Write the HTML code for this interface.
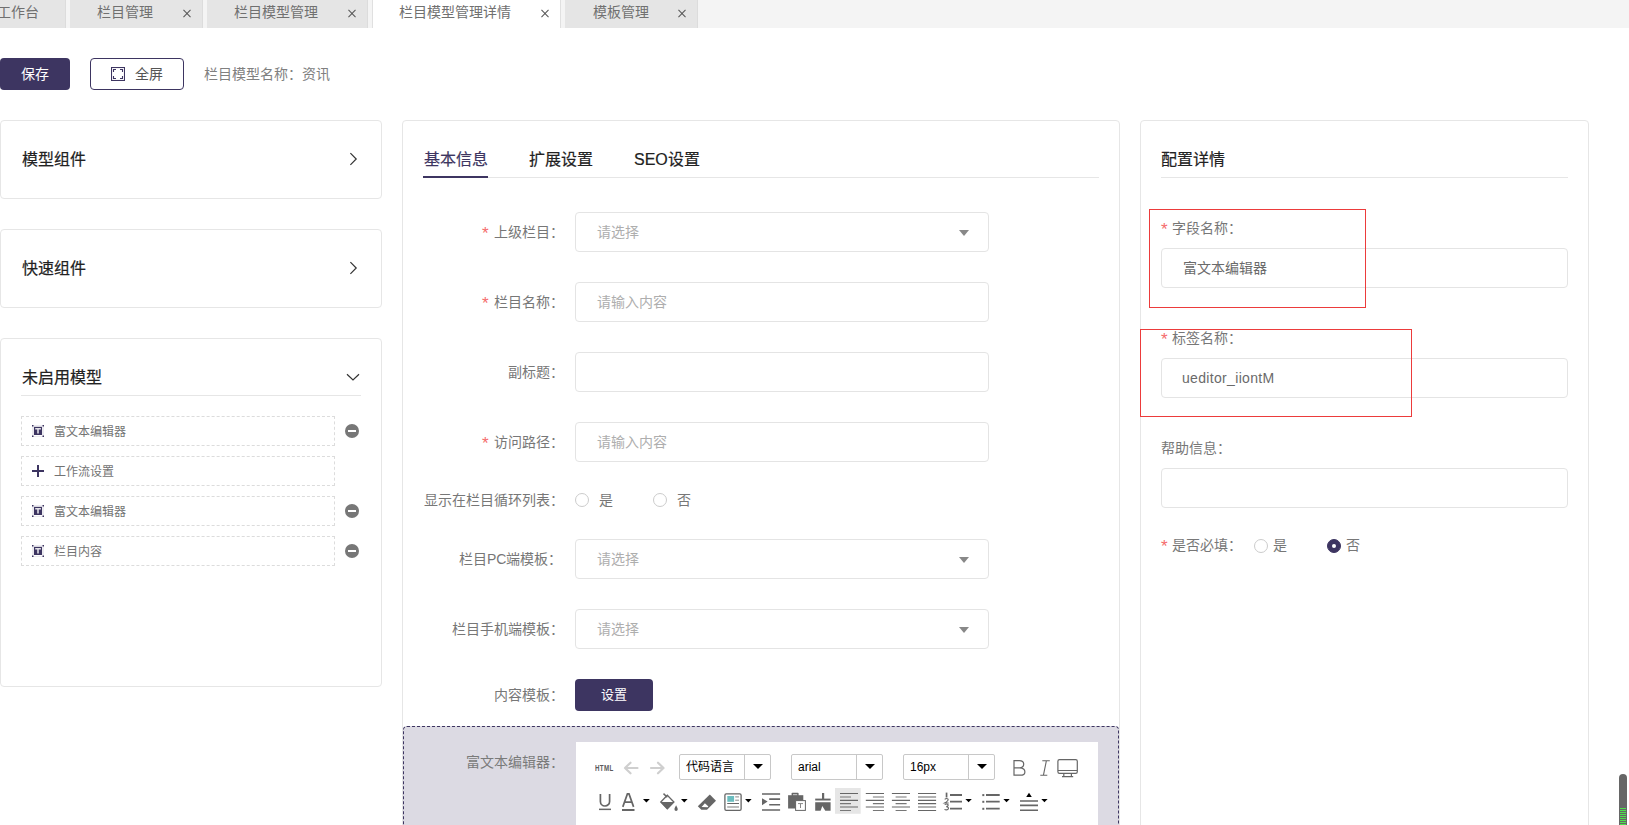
<!DOCTYPE html>
<html lang="zh-CN">
<head>
<meta charset="utf-8">
<style>
*{box-sizing:border-box;margin:0;padding:0}
html,body{width:1629px;height:825px;overflow:hidden;background:#fff}
body{position:relative;font-family:"Liberation Sans",sans-serif;font-size:14px;color:#606266}
.a{position:absolute}
.t{position:absolute;white-space:nowrap;line-height:20px;height:20px}
/* tab bar */
#tabbar{left:0;top:0;width:1629px;height:28px;background:#f4f4f4}
.tab{position:absolute;top:0;height:28px;background:#e5e5e5;border-right:1px solid #dcdcdc}
.tab.on{background:#fff;border-left:1px solid #e0e0e0;border-right:1px solid #e0e0e0}
.tab .t{top:2px;color:#707070;font-size:14px}
.x{position:absolute;top:9px;width:8px;height:8px}
.x:before,.x:after{content:"";position:absolute;left:-1px;top:3.5px;width:10px;height:1px;background:#555;transform:rotate(45deg)}
.x:after{transform:rotate(-45deg)}
/* buttons */
.btn{position:absolute;border-radius:4px;background:#3d3561;color:#fff}
.card{position:absolute;border:1px solid #e6e6e6;border-radius:4px;background:#fff}
.ttl{font-size:16px;font-weight:400;color:#222;-webkit-text-stroke:0.2px #222}
.inp{position:absolute;border:1px solid #e4e4e4;border-radius:4px;background:#fff}
.ph{color:#aeaeae}
.lbl{color:#777}
.req{color:#f56c6c;font-size:17px;transform:translateY(2px)}
.tri{position:absolute;width:0;height:0;border-left:5px solid transparent;border-right:5px solid transparent;border-top:6px solid #888}
.radio{position:absolute;width:14px;height:14px;border:1px solid #ccc;border-radius:50%;background:#fff}
.dash{position:absolute;border:1px dashed #dcdcdc;left:21px;width:314px;height:30px}
.minus{position:absolute;left:345px;width:14px;height:14px;border-radius:50%;background:#777}
.minus:after{content:"";position:absolute;left:3px;top:6px;width:8px;height:2px;background:#fff}
.ticon{position:absolute;left:32px;width:12px;height:12px;background:#3d3561}
.ticon:after{content:"";position:absolute;left:3px;top:3px;width:6px;height:2px;background:#fff}
.ticon:before{content:"";position:absolute;left:5px;top:3px;width:2px;height:6px;background:#fff}
.dd{position:absolute;top:754px;height:26px;border:1px solid #c8c8c8;border-radius:2px;background:#fff}
.sep{position:absolute;top:0;width:1px;height:24px;background:#c8c8c8}
.tri2{position:absolute;top:9px;width:0;height:0;border-left:5px solid transparent;border-right:5px solid transparent;border-top:5px solid #000}
</style>
</head>
<body>
<!-- TAB BAR -->
<div id="tabbar" class="a">
  <div class="tab" style="left:-10px;width:76px"><span class="t" style="left:7px">工作台</span></div>
  <div class="tab" style="left:70px;width:133px"><span class="t" style="left:27px">栏目管理</span><i class="x" style="left:113px"></i></div>
  <div class="tab" style="left:207px;width:161px"><span class="t" style="left:27px">栏目模型管理</span><i class="x" style="left:141px"></i></div>
  <div class="tab on" style="left:372px;width:189px"><span class="t" style="left:26px">栏目模型管理详情</span><i class="x" style="left:168px"></i></div>
  <div class="tab" style="left:565px;width:133px"><span class="t" style="left:28px">模板管理</span><i class="x" style="left:113px"></i></div>
</div>

<!-- TOOLBAR -->
<div class="btn" style="left:0;top:58px;width:70px;height:32px"><span class="t" style="left:21px;top:6px;color:#fff">保存</span></div>
<div class="a" style="left:90px;top:58px;width:94px;height:32px;border:1px solid #3d3561;border-radius:4px">
  <svg class="a" style="left:20px;top:8px" width="14" height="14" viewBox="0 0 14 14" fill="none" stroke="#3d3561" stroke-width="1.1"><rect x="0.5" y="0.5" width="13" height="13"/><path d="M2.5 5V2.5H5M9 2.5H11.5V5M2.5 9V11.5H5M9 11.5H11.5V9"/></svg>
  <span class="t" style="left:44px;top:5px;color:#555">全屏</span>
</div>
<span class="t" style="left:204px;top:64px;color:#808080">栏目模型名称：资讯</span>

<!-- LEFT CARDS -->
<div class="card" style="left:0;top:120px;width:382px;height:79px">
  <span class="t ttl" style="left:21px;top:29px">模型组件</span>
</div>
<div class="card" style="left:0;top:229px;width:382px;height:79px">
  <span class="t ttl" style="left:21px;top:29px">快速组件</span>
</div>
<div class="card" style="left:0;top:338px;width:382px;height:349px">
  <span class="t ttl" style="left:21px;top:29px">未启用模型</span>
  <div class="a" style="left:20px;top:56px;width:340px;height:1px;background:#e6e6e6"></div>
</div>
<div class="dash" style="top:416px"></div>
<div class="dash" style="top:456px"></div>
<div class="dash" style="top:496px"></div>
<div class="dash" style="top:536px"></div>
<svg class="a" style="left:32px;top:425px" width="12" height="12" viewBox="0 0 12 12"><rect x="0.5" y="0.5" width="11" height="11" fill="none" stroke="#3d3561" stroke-opacity="0.1"/><g fill="#3d3561"><rect x="0" y="0" width="1.5" height="1.5"/><rect x="10.5" y="0" width="1.5" height="1.5"/><rect x="0" y="10.5" width="1.5" height="1.5"/><rect x="10.5" y="10.5" width="1.5" height="1.5"/><rect x="1.9" y="1.8" width="8.2" height="8.2"/></g><path d="M3.2 2.9H8.9V4.4H6.8V8.6H5.2V4.4H3.2Z" fill="#fff" fill-opacity="0.85"/></svg>
<svg class="a" style="left:32px;top:505px" width="12" height="12" viewBox="0 0 12 12"><rect x="0.5" y="0.5" width="11" height="11" fill="none" stroke="#3d3561" stroke-opacity="0.1"/><g fill="#3d3561"><rect x="0" y="0" width="1.5" height="1.5"/><rect x="10.5" y="0" width="1.5" height="1.5"/><rect x="0" y="10.5" width="1.5" height="1.5"/><rect x="10.5" y="10.5" width="1.5" height="1.5"/><rect x="1.9" y="1.8" width="8.2" height="8.2"/></g><path d="M3.2 2.9H8.9V4.4H6.8V8.6H5.2V4.4H3.2Z" fill="#fff" fill-opacity="0.85"/></svg>
<svg class="a" style="left:32px;top:545px" width="12" height="12" viewBox="0 0 12 12"><rect x="0.5" y="0.5" width="11" height="11" fill="none" stroke="#3d3561" stroke-opacity="0.1"/><g fill="#3d3561"><rect x="0" y="0" width="1.5" height="1.5"/><rect x="10.5" y="0" width="1.5" height="1.5"/><rect x="0" y="10.5" width="1.5" height="1.5"/><rect x="10.5" y="10.5" width="1.5" height="1.5"/><rect x="1.9" y="1.8" width="8.2" height="8.2"/></g><path d="M3.2 2.9H8.9V4.4H6.8V8.6H5.2V4.4H3.2Z" fill="#fff" fill-opacity="0.85"/></svg>
<span class="t" style="left:54px;top:422px;font-size:12px;color:#737373">富文本编辑器</span>
<span class="t" style="left:54px;top:462px;font-size:12px;color:#737373">工作流设置</span>
<span class="t" style="left:54px;top:502px;font-size:12px;color:#737373">富文本编辑器</span>
<span class="t" style="left:54px;top:542px;font-size:12px;color:#737373">栏目内容</span>
<i class="minus" style="top:424px"></i>
<i class="minus" style="top:504px"></i>
<i class="minus" style="top:544px"></i>

<svg class="a" style="left:0;top:0" width="400" height="600" viewBox="0 0 400 600" fill="none" stroke="#333" stroke-width="1.2">
 <path d="M350.4 153.2L356.2 159L350.4 164.8"/>
 <path d="M350.4 262.2L356.2 268L350.4 273.8"/>
 <path d="M347 374.2L353 380L359 374.2"/>
 <path d="M32 471H44M38 465V477" stroke="#3d3561" stroke-width="2"/>
</svg>
<!-- MIDDLE PANEL -->
<div class="card" style="left:402px;top:120px;width:718px;height:720px"></div>
<span class="t" style="left:424px;top:149px;font-size:16px;color:#3d3561;height:22px;line-height:22px;-webkit-text-stroke:0.2px #3d3561">基本信息</span>
<span class="t" style="left:529px;top:149px;font-size:16px;color:#222;height:22px;line-height:22px;-webkit-text-stroke:0.2px #222">扩展设置</span>
<span class="t" style="left:634px;top:149px;font-size:16px;color:#222;height:22px;line-height:22px;-webkit-text-stroke:0.2px #222">SEO设置</span>
<div class="a" style="left:423px;top:177px;width:676px;height:1px;background:#e6e6e6"></div>
<div class="a" style="left:423px;top:176px;width:65px;height:2px;background:#3d3561"></div>

<span class="t req" style="left:482px;top:222px">*</span><span class="t lbl" style="left:494px;top:222px">上级栏目：</span>
<div class="inp" style="left:575px;top:212px;width:414px;height:40px"><span class="t ph" style="left:21px;top:9px">请选择</span><i class="tri" style="left:383px;top:17px"></i></div>

<span class="t req" style="left:482px;top:292px">*</span><span class="t lbl" style="left:494px;top:292px">栏目名称：</span>
<div class="inp" style="left:575px;top:282px;width:414px;height:40px"><span class="t ph" style="left:21px;top:9px">请输入内容</span></div>

<span class="t lbl" style="left:508px;top:362px">副标题：</span>
<div class="inp" style="left:575px;top:352px;width:414px;height:40px"></div>

<span class="t req" style="left:482px;top:432px">*</span><span class="t lbl" style="left:494px;top:432px">访问路径：</span>
<div class="inp" style="left:575px;top:422px;width:414px;height:40px"><span class="t ph" style="left:21px;top:9px">请输入内容</span></div>

<span class="t lbl" style="left:424px;top:490px">显示在栏目循环列表：</span>
<i class="radio" style="left:575px;top:493px"></i><span class="t lbl" style="left:599px;top:490px">是</span>
<i class="radio" style="left:653px;top:493px"></i><span class="t lbl" style="left:677px;top:490px">否</span>

<span class="t lbl" style="left:459px;top:549px">栏目PC端模板：</span>
<div class="inp" style="left:575px;top:539px;width:414px;height:40px"><span class="t ph" style="left:21px;top:9px">请选择</span><i class="tri" style="left:383px;top:17px"></i></div>

<span class="t lbl" style="left:452px;top:619px">栏目手机端模板：</span>
<div class="inp" style="left:575px;top:609px;width:414px;height:40px"><span class="t ph" style="left:21px;top:9px">请选择</span><i class="tri" style="left:383px;top:17px"></i></div>

<span class="t lbl" style="left:494px;top:685px">内容模板：</span>
<div class="btn" style="left:575px;top:679px;width:78px;height:32px"><span class="t" style="left:26px;top:6px;color:#fff;font-size:13px">设置</span></div>

<!-- EDITOR -->
<div class="a" style="left:403px;top:726px;width:716px;height:120px;background:#dcdae3;border:1px dashed #3d3561;border-radius:4px"></div>
<span class="t" style="left:466px;top:752px;color:#7a7a7a">富文本编辑器：</span>
<div class="a" style="left:576px;top:742px;width:522px;height:100px;background:#fff"></div>
<!-- editor toolbar row1 -->
<span class="a" style="left:595px;top:763px;font-size:8.6px;line-height:10px;font-weight:700;color:#5a5a5a;letter-spacing:0.5px;transform:scaleX(0.72);transform-origin:0 0;white-space:nowrap">HTML</span>
<div class="dd" style="left:679px;width:92px"><span class="t" style="left:6px;top:1px;font-size:12px;color:#000;line-height:22px;height:22px">代码语言</span><i class="sep" style="left:64px"></i><i class="tri2" style="left:73px"></i></div>
<div class="dd" style="left:791px;width:92px"><span class="t" style="left:6px;top:1px;font-size:12px;color:#000;line-height:22px;height:22px">arial</span><i class="sep" style="left:64px"></i><i class="tri2" style="left:73px"></i></div>
<div class="dd" style="left:903px;width:92px"><span class="t" style="left:6px;top:1px;font-size:12px;color:#000;line-height:22px;height:22px">16px</span><i class="sep" style="left:64px"></i><i class="tri2" style="left:73px"></i></div>
<svg class="a" style="left:0;top:0" width="1629" height="825" viewBox="0 0 1629 825">
 <g fill="none" stroke="#cfcfcf" stroke-width="2.2" stroke-linecap="round" stroke-linejoin="round">
  <path d="M637.5 768H625M630.5 762.7L625 768L630.5 773.3"/>
  <path d="M651 768H663.5M658 762.7L663.5 768L658 773.3"/>
 </g>
 <g fill="none" stroke="#666" stroke-width="1.2">
  <path d="M1014 760.7H1019.3C1022.4 760.7 1023.7 762.4 1023.7 764.2C1023.7 766.1 1022.4 767.5 1019.6 767.8C1023 768 1024.9 769.7 1024.9 771.9C1024.9 774.2 1023.2 775.2 1020.2 775.2H1014ZM1014 767.8H1019.8"/>
  <path d="M1042.3 760.7H1049.8M1040.3 775.3H1047.3M1046.4 760.7L1043.4 775.3" stroke-width="1.1"/>
  <rect x="1057.9" y="759.7" width="19.4" height="13.6" rx="1.6"/>
  <path d="M1058 770.5H1077M1063.8 773.3V776.2M1071.4 773.3V776.2M1062 776.6H1073.2"/>
 </g>
 <!-- row2 -->
 <g fill="none" stroke="#666" stroke-width="1.3">
  <path d="M600.4 794V801.4A4.6 4.6 0 0 0 609.6 801.4V794" stroke-width="1.7"/>
  <path d="M622.8 806.9L627.4 793.9H629L633.6 806.9M624.5 802.2H631.9" stroke-width="1.7"/>
 </g>
 <g fill="#666">
  <rect x="599" y="808.6" width="12" height="1.5"/>
  <rect x="622" y="809" width="12.5" height="2"/>
 </g>
 <g fill="#000">
  <path d="M643 799H649.8L646.4 802.4Z"/>
  <path d="M681 799H687.6L684.3 802.4Z"/>
  <path d="M745.1 799H751.6L748.35 802.4Z"/>
  <path d="M965.4 799H971.8L968.6 802.3Z"/>
  <path d="M1003.4 799H1009.7L1006.55 802.3Z"/>
  <path d="M1041.3 799H1047.6L1044.45 802.3Z"/>
 </g>
 <!-- bucket -->
 <path d="M660.8 802L667.3 795.3L673.9 802L667.3 808.8Z" fill="none" stroke="#666" stroke-width="1.3"/>
 <path d="M660.5 802H674.2L667.3 809.3Z" fill="#666"/>
 <path d="M663.5 793.6L667.3 797.2" stroke="#666" stroke-width="1.5"/>
 <path d="M676.1 805.3C675.2 807 674.5 808 674.5 809.3C674.5 810.3 675.2 810.9 676.1 810.9C677 810.9 677.7 810.3 677.7 809.3C677.7 808 677 807 676.1 805.3Z" fill="#666"/>
 <!-- eraser -->
 <path d="M709.8 794.6L716 800.8L707 809.7H701.3L697.8 806.3Z" fill="#666"/>
 <path d="M701.6 807.1L704.9 803.2L708.4 806.4L707.6 807.3Z" fill="#fff"/>
 <!-- image layout -->
 <rect x="724.9" y="793.9" width="16.2" height="16.4" rx="1.3" fill="none" stroke="#666" stroke-width="1.3"/>
 <rect x="727.3" y="796" width="6.8" height="5.8" fill="#6bbdbf"/>
 <path d="M735.2 796.9H739M735.2 800.2H739" stroke="#888" stroke-width="1"/>
 <path d="M727.2 803.5H739" stroke="#666" stroke-width="1"/>
 <path d="M727.2 807H739" stroke="#999" stroke-width="1.3"/>
 <!-- indent -->
 <g stroke="#666" stroke-width="1.6">
  <path d="M762 794H780.1M769.2 799.1H780.1M769.2 804.7H780.1M762 810H780.1"/>
 </g>
 <path d="M762 798.2L767.6 801.6L762 805.2Z" fill="#666"/>
 <!-- paste -->
 <rect x="788.1" y="795.2" width="15.2" height="13.3" fill="#666"/>
 <rect x="791.6" y="792.8" width="7" height="3.6" rx="0.8" fill="#666"/>
 <rect x="793" y="794" width="4.2" height="1.2" fill="#bbb"/>
 <rect x="795.6" y="800.6" width="9.8" height="9.8" fill="#fff" stroke="#666" stroke-width="1"/>
 <path d="M798 803.6H803M800.5 803.6V808" stroke="#888" stroke-width="1"/>
 <!-- format painter -->
 <rect x="822" y="793" width="2.2" height="6" fill="#666"/>
 <rect x="815.2" y="798.6" width="15.4" height="1.9" fill="#666"/>
 <path d="M815.2 802.2H830.6V810.8H825.3L822.3 806L820.6 810.8H815.2Z" fill="#666"/>
 <!-- active align left -->
 <rect x="835" y="788" width="25.7" height="25.8" fill="#e6e6e6"/>
 <g stroke="#666" stroke-width="1.2">
  <path d="M840 793.5H858M840 800.3H858M840 807H858"/>
  <path d="M840 797H851M840 803.6H851M840 810.5H851" stroke="#777"/>
  <path d="M865.8 793.5H884M865.8 800.3H884M865.8 807H884"/>
  <path d="M872.9 797H884M872.9 803.6H884M872.9 810.5H884" stroke="#777"/>
  <path d="M891.9 793.5H910M891.9 800.3H910M891.9 807H910"/>
  <path d="M895.6 797H906.6M895.6 803.6H906.6M895.6 810.5H906.6" stroke="#777"/>
  <path d="M918 793.5H936.1M918 797H936.1M918 800.3H936.1M918 803.6H936.1M918 807H936.1M918 810.5H936.1"/>
 </g>
 <!-- ordered list -->
 <g stroke="#666" stroke-width="1.8">
  <path d="M950 795H962M950 801.7H962M950 808.7H962"/>
  <path d="M986 795H999.7M986 801.7H999.7M986 808.7H999.7"/>
 </g>
 <g fill="#666">
  <rect x="945.7" y="792.6" width="1.7" height="4.9"/>
  <rect x="982.3" y="794.1" width="2" height="2"/>
  <rect x="982.3" y="800.8" width="2" height="2"/>
  <rect x="982.3" y="807.8" width="2" height="2"/>
 </g>
 <path d="M944.7 799.4Q946.5 797.7 948.1 799.2Q948.7 800.7 944.6 803H948.7" fill="none" stroke="#666" stroke-width="1.1"/>
 <path d="M944.7 804.6Q946.6 803.3 948.1 804.7Q948.5 806.3 946.3 806.6Q948.8 807 948.4 808.8Q946.6 810.7 944.5 809.4" fill="none" stroke="#666" stroke-width="1.1"/>
 <!-- line height -->
 <path d="M1026.2 796.9L1029 792.8L1031.8 796.9Z" fill="#000"/>
 <path d="M1020 801H1038M1020 805.4H1038M1020 810.2H1038" stroke="#666" stroke-width="1.6"/>
 <!-- scrollbar stripes -->
 <g fill="#4de24d">
  <rect x="1620" y="808" width="6" height="1"/><rect x="1620" y="810" width="6" height="1"/><rect x="1620" y="812" width="6" height="1"/><rect x="1620" y="814" width="6" height="1"/><rect x="1620" y="816" width="6" height="1"/><rect x="1620" y="818" width="6" height="1"/><rect x="1620" y="820" width="6" height="1"/><rect x="1620" y="822" width="6" height="1"/><rect x="1620" y="824" width="6" height="1"/>
 </g>
</svg>

<!-- RIGHT PANEL -->
<div class="card" style="left:1140px;top:120px;width:449px;height:720px"></div>
<span class="t ttl" style="left:1161px;top:149px;height:22px;line-height:22px">配置详情</span>
<div class="a" style="left:1161px;top:177px;width:407px;height:1px;background:#e6e6e6"></div>

<span class="t req" style="left:1161px;top:218px">*</span><span class="t lbl" style="left:1172px;top:218px">字段名称：</span>
<div class="inp" style="left:1161px;top:248px;width:407px;height:40px"><span class="t" style="left:21px;top:9px;color:#6a6a6a">富文本编辑器</span></div>
<span class="t req" style="left:1161px;top:328px">*</span><span class="t lbl" style="left:1172px;top:328px">标签名称：</span>
<div class="inp" style="left:1161px;top:358px;width:407px;height:40px"><span class="t" style="left:20px;top:9px;color:#6a6a6a;letter-spacing:0.33px">ueditor_iiontM</span></div>
<span class="t lbl" style="left:1161px;top:438px">帮助信息：</span>
<div class="inp" style="left:1161px;top:468px;width:407px;height:40px"></div>
<span class="t req" style="left:1161px;top:535px">*</span><span class="t lbl" style="left:1172px;top:535px">是否必填：</span>
<i class="radio" style="left:1254px;top:539px"></i><span class="t lbl" style="left:1273px;top:535px">是</span>
<i class="radio" style="left:1327px;top:539px;background:#3d3561;border-color:#3d3561"><i class="a" style="left:4px;top:4px;width:4px;height:4px;border-radius:50%;background:#fff"></i></i><span class="t lbl" style="left:1346px;top:535px">否</span>

<div class="a" style="left:1149px;top:209px;width:217px;height:99px;border:1px solid #ec3b3b"></div>
<div class="a" style="left:1140px;top:329px;width:272px;height:88px;border:1px solid #ec3b3b"></div>

<!-- scrollbar -->
<div class="a" style="left:1619px;top:774px;width:8px;height:60px;border-radius:4px 4px 0 0;background:#666"><div class="a" style="left:1px;top:34px;width:6px;height:26px;background:repeating-linear-gradient(#4de24d 0 1px,#666 1px 2px)"></div></div>

</body>
</html>
